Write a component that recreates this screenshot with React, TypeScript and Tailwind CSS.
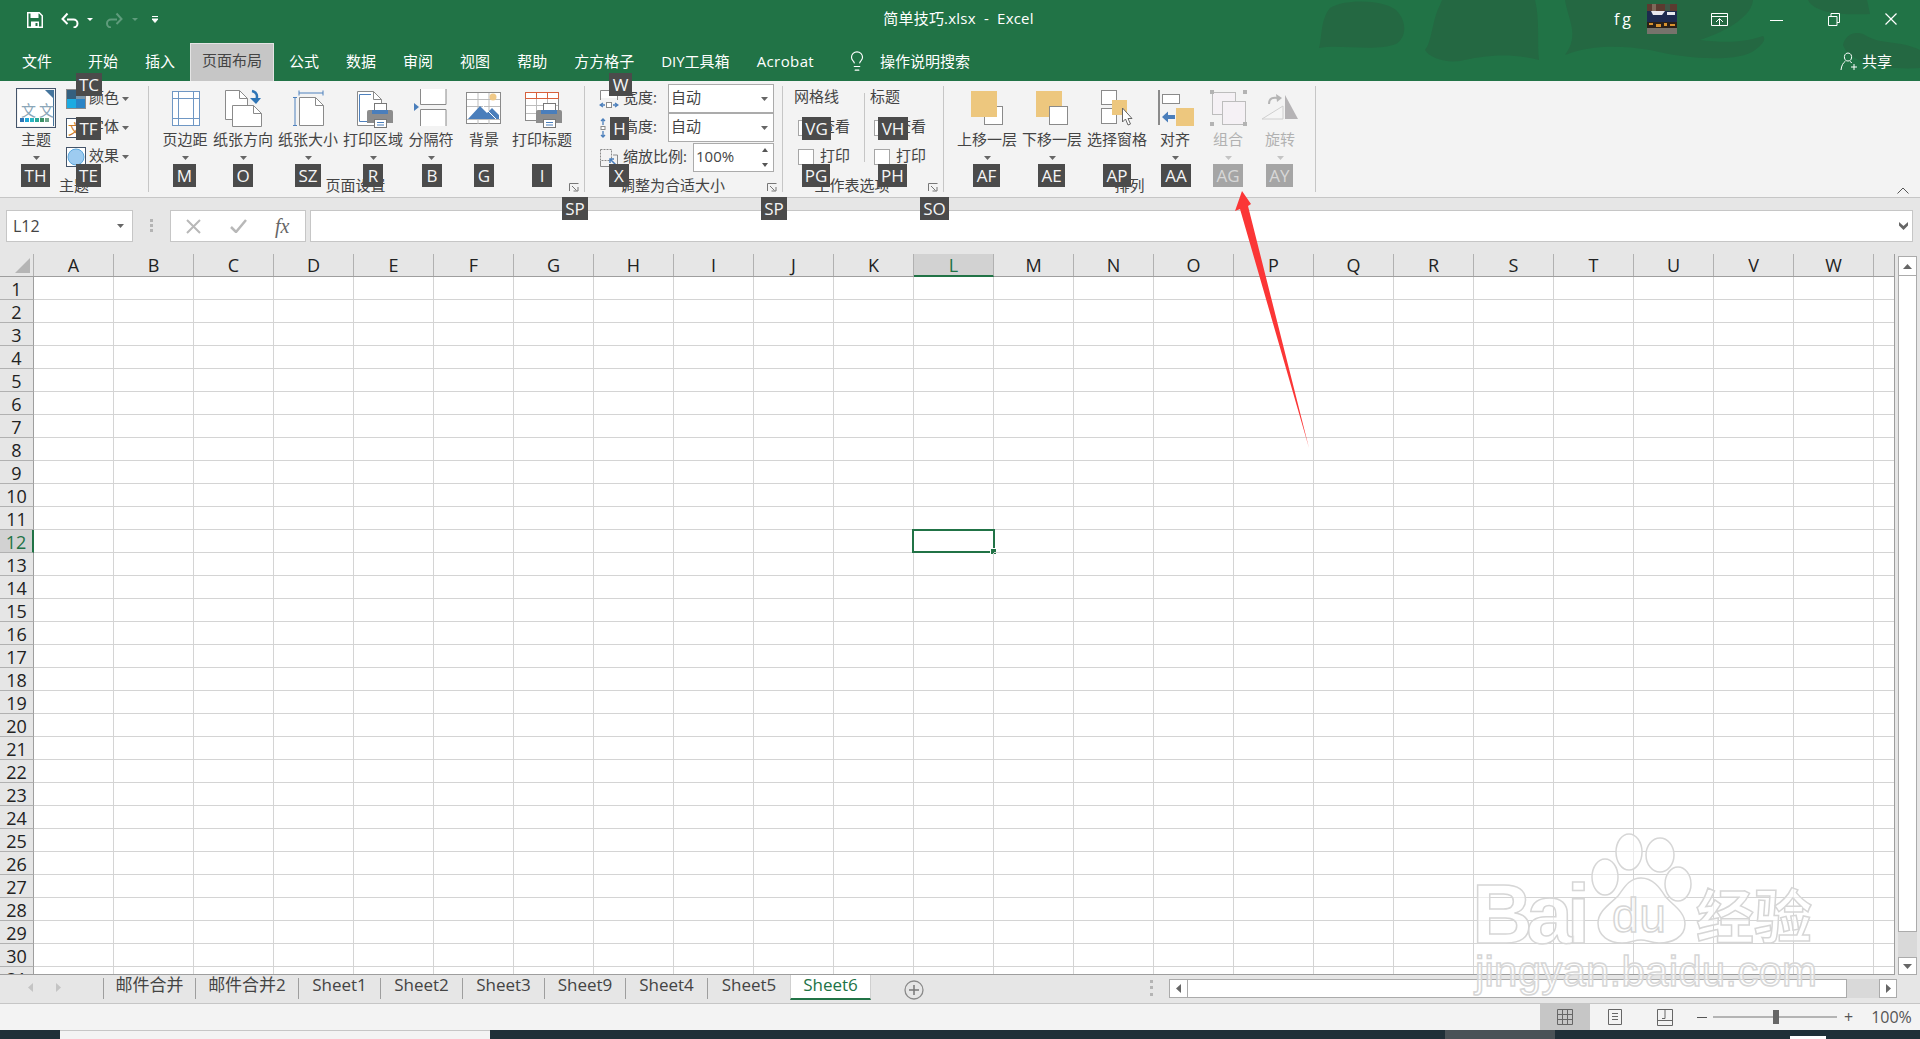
import React from 'react';
import { Lightbulb } from 'lucide-react';

const COLS = 'ABCDEFGHIJKLMNOPQRSTUVW'.split('');
const ROWS = Array.from({ length: 31 }, (_, i) => i + 1);

const KEYTIPS: { x: number; y: number; w: number; t: string; off?: boolean }[] = [
  { x: 76, y: 73, w: 26, t: 'TC' }, { x: 76, y: 117, w: 25, t: 'TF' }, { x: 76, y: 164, w: 25, t: 'TE' },
  { x: 21, y: 164, w: 29, t: 'TH' }, { x: 173, y: 164, w: 23, t: 'M' }, { x: 233, y: 164, w: 20, t: 'O' },
  { x: 295, y: 164, w: 26, t: 'SZ' }, { x: 363, y: 164, w: 20, t: 'R' }, { x: 422, y: 164, w: 20, t: 'B' },
  { x: 474, y: 164, w: 20, t: 'G' }, { x: 532, y: 164, w: 20, t: 'I' }, { x: 562, y: 197, w: 26, t: 'SP' },
  { x: 609, y: 73, w: 23, t: 'W' }, { x: 610, y: 117, w: 19, t: 'H' }, { x: 609, y: 164, w: 20, t: 'X' },
  { x: 761, y: 197, w: 26, t: 'SP' }, { x: 802, y: 117, w: 29, t: 'VG' }, { x: 878, y: 117, w: 30, t: 'VH' },
  { x: 802, y: 164, w: 28, t: 'PG' }, { x: 878, y: 164, w: 29, t: 'PH' }, { x: 920, y: 197, w: 29, t: 'SO' },
  { x: 973, y: 164, w: 27, t: 'AF' }, { x: 1038, y: 164, w: 27, t: 'AE' }, { x: 1103, y: 164, w: 28, t: 'AP' },
  { x: 1161, y: 164, w: 30, t: 'AA' }, { x: 1213, y: 164, w: 30, t: 'AG', off: true }, { x: 1266, y: 164, w: 27, t: 'AY', off: true },
];

const SHEETS = [
  { name: '邮件合并', w: 'w-[92px]' }, { name: '邮件合并2', w: 'w-[103px]' }, { name: 'Sheet1', w: 'w-[82px]' },
  { name: 'Sheet2', w: 'w-[82px]' }, { name: 'Sheet3', w: 'w-[82px]' }, { name: 'Sheet9', w: 'w-[81px]' },
  { name: 'Sheet4', w: 'w-[82px]' }, { name: 'Sheet5', w: 'w-[83px]' },
];

const Caret = ({ off }: { off?: boolean }) => (
  <svg width="7" height="4" viewBox="0 0 7 4" className="shrink-0">
    <path d="M0 0h7L3.5 4z" fill={off ? '#c4c4c4' : '#666'} />
  </svg>
);

// icons are drawn in page coordinates: the viewBox is the window around the button
const Ico = ({ cx, children }: { cx: number; children: React.ReactNode }) => (
  <svg width="70" height="44" viewBox={`${cx - 35} 86 70 44`} className="shrink-0 overflow-visible">
    {children}
  </svg>
);

const Printer = ({ dx = 0 }: { dx?: number }) => (
  <g transform={`translate(${dx} 0)`}>
    <rect x="374.5" y="103.5" width="12" height="9" fill="#fff" stroke="#777" />
    <path d="M369 110h22a2 2 0 0 1 2 2v11h-26v-11a2 2 0 0 1 2-2z" fill="#8c8c8c" />
    <rect x="372" y="110" width="16" height="4" fill="#4a7ebb" />
    <rect x="374.5" y="119.5" width="12" height="8" fill="#fff" stroke="#777" />
    <path d="M377 122.5h7M377 125h7" stroke="#4a7ebb" />
  </g>
);

const Doc = ({ x, y, w, h }: { x: number; y: number; w: number; h: number }) => (
  <g>
    <path d={`M${x + .5} ${y + .5}h${w - 8}l8 8v${h - 8}h-${w}z`} fill="#fff" stroke="#8a8a8a" />
    <path d={`M${x + w - 7.5} ${y + .5}v8h8`} fill="none" stroke="#8a8a8a" />
  </g>
);

const icons: Record<string, React.ReactNode> = {
  margin: (
    <Ico cx={185}>
      <rect x="172.5" y="91.5" width="27" height="34" fill="#fff" stroke="#6f97c4" />
      <path d="M178.5 91v35M193.5 91v35M172 98.5h28M172 118.5h28" stroke="#6f97c4" />
    </Ico>
  ),
  orient: (
    <Ico cx={243}>
      <Doc x={225} y={90} w={22} h={29} />
      <Doc x={232} y={105} w={29} h={21} />
      <path d="M252 91c5 1 6 5 4 10" fill="none" stroke="#2e75b6" strokeWidth="2.5" />
      <path d="M250 98l6 6 5-6z" fill="#2e75b6" />
    </Ico>
  ),
  size: (
    <Ico cx={308}>
      <path d="M299 90.5v5M323 90.5v5M299 93h24M293 97.5h4M293 125.5h4M295 97v29" stroke="#4f81bd" fill="none" />
      <Doc x={299} y={97} w={24} h={28} />
    </Ico>
  ),
  area: (
    <Ico cx={373}>
      <Doc x={357} y={91} w={24} h={34} />
      <path d="M371 94.5h-11.500v27h8" fill="none" stroke="#4f81bd" />
      <Printer />
    </Ico>
  ),
  breaks: (
    <Ico cx={431}>
      <path d="M420.500 89v15.500h25.500V89M420.500 126v-16.500h25.500V126" fill="#fff" stroke="#8a8a8a" />
      <path d="M414 103l5 4-5 4z" fill="#4a7ebb" />
    </Ico>
  ),
  bg: (
    <Ico cx={484}>
      <rect x="466.500" y="92.500" width="34" height="31" fill="#fff" stroke="#8a8a8a" />
      <path d="M467 99.500h33M467 106.500h33M467 119.500h33M478 93v31M489 93v31" stroke="#bdbdbd" />
      <path d="M468 119l12-13 7 7 5-5 7 7v4z" fill="#4a7ebb" />
      <path d="M483 106l13 13" stroke="#fff" />
      <circle cx="493" cy="97" r="3.500" fill="#f0c987" />
    </Ico>
  ),
  titles: (
    <Ico cx={542}>
      <rect x="525.500" y="92.500" width="33" height="28" fill="#fff" stroke="#8a8a8a" />
      <path d="M526 105.500h32M526 113.500h32M536.500 98v23M547.500 98v23" stroke="#bdbdbd" />
      <path d="M525.500 92.500h33v6h-33zM536.500 92v6M547.500 92v6" fill="none" stroke="#d9603b" />
      <Printer dx={169} />
    </Ico>
  ),
  up: (
    <Ico cx={987}>
      <rect x="984.500" y="106.500" width="18" height="18" fill="#fff" stroke="#8a8a8a" />
      <rect x="971" y="91" width="26" height="26" fill="#edc77e" />
    </Ico>
  ),
  down: (
    <Ico cx={1052}>
      <rect x="1036" y="91" width="26" height="26" fill="#edc77e" />
      <rect x="1049.500" y="106.500" width="18" height="18" fill="#fff" stroke="#8a8a8a" />
    </Ico>
  ),
  pane: (
    <Ico cx={1117}>
      <rect x="1101.500" y="90.500" width="15" height="14" fill="#fff" stroke="#8a8a8a" />
      <rect x="1101.500" y="108.500" width="15" height="15" fill="#fff" stroke="#8a8a8a" />
      <path d="M1112 100h15v15h-5v-0h-5v-0h-5z" fill="#edc77e" />
      <path d="M1122.500 108v14l3-3 2.500 6 2.500-1-2.500-5.500h4z" fill="#fff" stroke="#666" />
    </Ico>
  ),
  align: (
    <Ico cx={1175}>
      <rect x="1158" y="90" width="2" height="35" fill="#8a8a8a" />
      <rect x="1162.500" y="94.500" width="17" height="9" fill="#fff" stroke="#8a8a8a" />
      <rect x="1176" y="108" width="18" height="18" fill="#edc77e" />
      <path d="M1162 117l6-5.500v3.500h7v4h-7v3.500z" fill="#4a7ebb" />
    </Ico>
  ),
  group: (
    <Ico cx={1228}>
      <rect x="1212.500" y="92.500" width="23" height="22" fill="#f5f1f5" stroke="#bdbdbd" />
      <rect x="1222.500" y="101.500" width="23" height="23" fill="#f5f1f5" stroke="#bdbdbd" />
      <path d="M1210 90h4v4h-4zM1243 90h4v4h-4zM1210 122h4v4h-4zM1243 122h4v4h-4z" fill="#b3b3b3" />
    </Ico>
  ),
  rotate: (
    <Ico cx={1280}>
      <path d="M1285 95l13 24h-13z" fill="#b5b3b5" />
      <path d="M1283 106v13h-21z" fill="#f5f5f5" stroke="#cfcfcf" />
      <path d="M1269 104c0-6 4-7 9-6" fill="none" stroke="#b5b5b5" strokeWidth="2" />
      <path d="M1276 94l6 4-5 4z" fill="#b5b5b5" />
    </Ico>
  ),
  theme: (
    <Ico cx={36}>
      <rect x="16.500" y="88.500" width="39" height="39" fill="#f3f3f3" stroke="#44546a" />
      <path d="M18 90h27l8 8v28H18z" fill="#fff" />
      <path d="M45 90h9v36h-1V98l-8-8z" fill="#44749c" />
      <text x="21" y="116" fontSize="15" fill="#8aa6b8" fontFamily="Noto Sans CJK SC">文</text>
      <text x="39" y="116" fontSize="15" fill="#8aa6b8" fontFamily="Noto Sans CJK SC" textLength="13">文</text>
      <rect x="20" y="118" width="4" height="4" fill="#2e75b6" />
      <rect x="25" y="118" width="4" height="4" fill="#1fa8d8" />
      <rect x="30" y="118" width="4" height="4" fill="#2bb6c4" />
      <rect x="35" y="118" width="4" height="4" fill="#2aa89a" />
      <rect x="40" y="118" width="4" height="4" fill="#3c9266" />
      <rect x="45" y="118" width="4" height="4" fill="#6fa58c" />
    </Ico>
  ),
};

const BigBtn = ({ w, label, icon, off, noCaret }: { w: string; label: string; icon: React.ReactNode; off?: boolean; noCaret?: boolean }) => (
  <div className={`${w} flex flex-col items-center shrink-0`}>
    {icon}
    <div className={`h-[20px] leading-[18px] text-[15px] whitespace-nowrap ${off ? 'text-[#b1b1b1]' : 'text-[#444]'}`}>{label}</div>
    <div className="h-[10px] flex items-end">{noCaret ? null : <Caret off={off} />}</div>
  </div>
);

const Launcher = () => (
  <div className="w-[22px] flex items-end pl-[7px] shrink-0">
    <svg width="10" height="9" viewBox="0 0 10 9">
      <path d="M.5 8V.5H9.500M3 3l4.500 4.500M4.500 8H9V4" fill="none" stroke="#777" />
    </svg>
  </div>
);

const Group = ({ w, label, launcher, children }: { w: string; label: string; launcher?: boolean; children: React.ReactNode }) => (
  <div className={`${w} shrink-0 h-[106px] mt-[5px] border-r border-[#c6c6c6] flex flex-col`}>
    <div className="h-[91px] flex">{children}</div>
    <div className="h-[15px] flex">
      <div className="flex-1 text-center text-[15px] leading-[16px] text-[#444] whitespace-nowrap">{label}</div>
      {launcher && <Launcher />}
    </div>
  </div>
);

const SmallRow = ({ label, children }: { label: string; children: React.ReactNode }) => (
  <div className="h-[29px] flex items-center text-[15px] text-[#444]">
    {children}
    <span className="ml-[3px] mr-[3px] pb-[2px]">{label}</span>
    <Caret />
  </div>
);

const Combo = ({ w, text, spin }: { w: string; text: string; spin?: boolean }) => (
  <div className={`${w} h-[29px] bg-white border border-[#ababab] flex items-center justify-between pl-[2px] pr-[5px] text-[15px] text-[#444]`}>
    <span className="pb-[2px]">{text}</span>
    {spin ? (
      <div className="flex flex-col gap-[11px]">
        <svg width="6" height="4" viewBox="0 0 6 4"><path d="M0 4h6L3 0z" fill="#555" /></svg>
        <svg width="6" height="4" viewBox="0 0 6 4"><path d="M0 0h6L3 4z" fill="#555" /></svg>
      </div>
    ) : (
      <Caret />
    )}
  </div>
);

const Check = ({ label }: { label: string }) => (
  <div className="h-[29px] flex items-center ml-[4px] text-[15px] text-[#444]">
    <div className="w-[16px] h-[16px] bg-white border border-[#a6a6a6] mr-[6px]" />
    <span className="pb-[2px]">{label}</span>
  </div>
);

function Avatar() {
  return (
    <svg width="30" height="30" viewBox="0 0 30 30" className="ml-[13px] shrink-0">
      <rect width="30" height="30" fill="#4c4a44" />
      <rect width="30" height="7" fill="#5b3b30" />
      <rect x="5" y="0" width="4" height="7" fill="#7f6a5a" />
      <rect x="18" y="0" width="5" height="7" fill="#3f5646" />
      <rect y="7" width="30" height="11" fill="#1d2a4e" />
      <path d="M4 7h14l-3 4H6zM20 8h8v3h-8z" fill="#e8e8ee" />
      <rect y="18" width="30" height="6" fill="#2a2018" />
      <path d="M2 19h4v2H2zM9 20h5v3H9zM17 19h3v3h-3zM23 20h5v2h-5z" fill="#d8922e" />
      <rect y="24" width="30" height="6" fill="#77736c" />
    </svg>
  );
}

export default function App() {
  return (
    <div className="relative w-[1920px] h-[1039px] overflow-hidden flex flex-col bg-[#e6e6e6] font-['Open_Sans','Noto_Sans_CJK_SC',sans-serif]">
      {/* Title bar + tabs */}
      <div className="relative h-[81px] shrink-0 bg-[#217346] text-white">
        <svg width="1920" height="81" viewBox="0 0 1920 81" className="absolute inset-0">
          <g fill="#246842">
            <path d="M1319 48C1322 40 1320 20 1330 8C1345-2 1385 0 1396 10C1408 22 1406 38 1396 44C1375 52 1340 44 1319 48Z" />
            <path d="M1425 50C1432 42 1432 20 1440 5L1442 0H1535C1540 20 1537 45 1539 60C1510 52 1480 56 1460 61C1445 63 1430 58 1425 50Z" />
            <path d="M1565 0C1568 20 1580 35 1565 55C1590 45 1620 45 1650 50C1690 60 1740 62 1755 50C1766 42 1765 38 1763 36C1740 44 1720 42 1700 40C1730 30 1752 15 1753 0Z" />
            <path d="M1808 0C1815 15 1850 15 1870 14L1867 0Z" />
            <path d="M1843 45C1845 35 1855 30 1865 35C1880 45 1900 40 1920 50V68C1890 70 1850 65 1843 45Z" />
          </g>
        </svg>
        <div className="relative h-[43px] pb-[5px] grid grid-cols-[1fr_auto_1fr] items-center">
          <div className="flex items-center pl-[27px] pt-[1px]">
            <svg width="16" height="16" viewBox="0 0 16 16">
              <path d="M.75.75h11.500l3 3v11.500H.75z" fill="none" stroke="#fff" strokeWidth="1.500" />
              <path d="M3.500 1v5h8V1zM4 15v-5.500h8V15" fill="#fff" />
              <rect x="8.500" y="11" width="2" height="3" fill="#217346" />
            </svg>
            <svg width="19" height="16" viewBox="0 0 19 16" className="ml-[18px]">
              <path d="M6 7.500h6.500a4 4 0 0 1 0 8" fill="none" stroke="#fff" strokeWidth="2" />
              <path d="M6.500 1.500L1.500 7l5 5" fill="none" stroke="#fff" strokeWidth="2" />
            </svg>
            <span className="ml-[7px]"><svg width="6" height="3" viewBox="0 0 6 3" className="block"><path d="M0 0h6L3 3z" fill="#fff" /></svg></span>
            <svg width="18" height="16" viewBox="0 0 18 16" className="ml-[12px]">
              <path d="M12 7.500H6a4 4 0 0 0 0 8" fill="none" stroke="#5f9c7c" strokeWidth="2" />
              <path d="M11.500 1.500l5 5.500-5 5" fill="none" stroke="#5f9c7c" strokeWidth="2" />
            </svg>
            <span className="ml-[9px]"><svg width="6" height="3" viewBox="0 0 6 3" className="block"><path d="M0 0h6L3 3z" fill="#5f9c7c" /></svg></span>
            <svg width="6" height="7" viewBox="0 0 6 7" className="ml-[14px]"><path d="M0 .5h6M0 3h6L3 6.500z" stroke="#fff" fill="#fff" /></svg>
          </div>
          <div className="text-[15px] whitespace-pre mr-[3px] mb-[2px] tracking-[0.2px]">简单技巧.xlsx  -  Excel</div>
          <div className="flex items-center justify-end pr-[23px]">
            <span className="text-[16px] tracking-[3px]">fg</span>
            <Avatar />
            <svg width="17" height="13" viewBox="0 0 17 13" className="ml-[34px]">
              <path d="M.5.500h16v12H.5zM1 3.500h15M5 9l3.500-3.500L12 9M8.500 6v6.500" fill="none" stroke="#fff" />
            </svg>
            <svg width="13" height="13" viewBox="0 0 13 13" className="ml-[42px]"><path d="M0 7.500h13" stroke="#fff" /></svg>
            <svg width="12" height="13" viewBox="0 0 12 13" className="ml-[45px]">
              <path d="M3 3V.5h8.500v9H9M.5 3.500h8.500v9H.5z" fill="none" stroke="#fff" />
            </svg>
            <svg width="12" height="12" viewBox="0 0 12 12" className="ml-[45px]"><path d="M.5.500l11 11M11.500.500l-11 11" stroke="#fff" strokeWidth="1.200" /></svg>
          </div>
        </div>
        <div className="relative h-[38px] flex items-center pl-[22px] pb-[2px] gap-[27px] text-[15px] whitespace-nowrap">
          <span className="mr-[9px]">文件</span>
          <span>开始</span>
          <span>插入</span>
          <span className="h-[38px] -mx-[12px] px-[11px] mt-[2px] flex items-center pb-[4px] bg-[#c6c6c6] text-[#444] border-x border-t border-[#e4e4e4]">页面布局</span>
          <span>公式</span>
          <span>数据</span>
          <span>审阅</span>
          <span>视图</span>
          <span>帮助</span>
          <span>方方格子</span>
          <span>DIY工具箱</span>
          <span className="tracking-[0.4px]">Acrobat</span>
          <span className="flex items-center ml-[5px]">
            <Lightbulb size={22} strokeWidth={1.25} />
            <span className="ml-[12px]">操作说明搜索</span>
          </span>
          <span className="ml-auto mr-[28px] flex items-center">
            <svg width="17" height="18" viewBox="0 0 17 18" className="mr-[5px]">
              <path d="M8 1c-3 0-4 3-3.500 5 .5 2 1.500 3 3.500 3s3-1 3.500-3C12 4 11 1 8 1zM1 18c.5-4.500 2-7 4.500-9M10 9.500c1 .5 1.500 1 2 1.500M11 15h6M14 12v6" fill="none" stroke="#fff" />
            </svg>
            共享
          </span>
        </div>
      </div>

      {/* Ribbon */}
      <div className="h-[117px] shrink-0 bg-[#f3f3f3] border-b border-[#c6c6c6] flex">
        <Group w="w-[149px]" label="主题">
          <div className="ml-[-1px] w-[67px]">
            <div className="flex flex-col items-center w-[74px]">
              {icons.theme}
              <div className="h-[20px] leading-[18px] text-[15px] text-[#444]">主题</div>
              <div className="h-[10px] flex items-end"><Caret /></div>
            </div>
          </div>
          <div className="flex flex-col -mt-[2px]">
            <SmallRow label="颜色">
              <svg width="20" height="20" viewBox="0 0 20 20">
                <rect width="20" height="20" fill="#8a8a8a" />
                <rect x="1" y="1" width="9" height="9" fill="#35607f" />
                <rect x="10" y="1" width="9" height="9" fill="#7a98ae" />
                <rect x="1" y="10" width="9" height="9" fill="#1cabe2" />
                <rect x="10" y="10" width="9" height="9" fill="#2b84c6" />
              </svg>
            </SmallRow>
            <SmallRow label="字体">
              <svg width="20" height="20" viewBox="0 0 20 20">
                <rect x=".5" y=".5" width="19" height="19" fill="#fff" stroke="#44546a" />
                <text x="2" y="16" fontSize="14" fill="#c97a2b" fontFamily="Noto Sans CJK SC">文</text>
              </svg>
            </SmallRow>
            <SmallRow label="效果">
              <svg width="20" height="20" viewBox="0 0 20 20">
                <rect x=".5" y=".5" width="19" height="19" fill="#fff" stroke="#44546a" />
                <circle cx="10" cy="10" r="8" fill="#9dcbf0" stroke="#5ba7dc" />
              </svg>
            </SmallRow>
          </div>
        </Group>

        <Group w="w-[436px]" label="页面设置" launcher>
          <div className="w-[9px] shrink-0" />
          <BigBtn w="w-[54px]" label="页边距" icon={icons.margin} />
          <BigBtn w="w-[62px]" label="纸张方向" icon={icons.orient} />
          <BigBtn w="w-[68px]" label="纸张大小" icon={icons.size} />
          <BigBtn w="w-[62px]" label="打印区域" icon={icons.area} />
          <BigBtn w="w-[54px]" label="分隔符" icon={icons.breaks} />
          <BigBtn w="w-[52px]" label="背景" icon={icons.bg} noCaret />
          <BigBtn w="w-[64px]" label="打印标题" icon={icons.titles} noCaret />
        </Group>

        <Group w="w-[198px]" label="调整为合适大小" launcher>
          <div className="-mt-[2px] pl-[14px]">
            <div className="h-[29px] flex items-center text-[15px] text-[#444]">
              <svg width="20" height="20" viewBox="0 0 20 20" className="shrink-0 mr-[4px]">
                <path d="M1.500 9V1.500h17V9" fill="#fff" stroke="#8a8a8a" />
                <path d="M1.500 9v3M18.500 9v3" stroke="#8a8a8a" strokeDasharray="2 1" />
                <rect x="7.500" y="13.500" width="5" height="5" fill="#fff" stroke="#8a8a8a" />
                <path d="M6 16H1M4 14l-3 2 3 2M14 16h5M16 14l3 2-3 2" fill="none" stroke="#4a7ebb" strokeWidth="1.300" />
              </svg>
              <span className="w-[45px] pb-[2px] whitespace-nowrap">宽度:</span>
              <Combo w="w-[106px]" text="自动" />
            </div>
            <div className="h-[29px] flex items-center text-[15px] text-[#444]">
              <svg width="20" height="20" viewBox="0 0 20 20" className="shrink-0 mr-[4px]">
                <path d="M4 1v6M2 3l2-2 2 2M4 19v-6M2 17l2 2 2-2" fill="none" stroke="#4a7ebb" strokeWidth="1.300" />
                <rect x="2" y="8.500" width="4" height="3" fill="#fff" stroke="#8a8a8a" />
              </svg>
              <span className="w-[45px] pb-[2px] whitespace-nowrap">高度:</span>
              <Combo w="w-[106px]" text="自动" />
            </div>
            <div className="h-[29px] mt-[1px] flex items-center text-[15px] text-[#444]">
              <svg width="20" height="20" viewBox="0 0 20 20" className="shrink-0 mr-[4px]">
                <rect x="1.500" y="1.500" width="11" height="11" fill="none" stroke="#8a8a8a" strokeDasharray="2 1" />
                <path d="M1.500 13v5.500h17V7H14" fill="none" stroke="#8a8a8a" />
                <path d="M17 17l-6-6M11 15v-4h4" fill="none" stroke="#4a7ebb" strokeWidth="1.500" />
              </svg>
              <span className="w-[70px] pb-[2px] whitespace-nowrap">缩放比例:</span>
              <Combo w="w-[81px]" text="100%" spin />
            </div>
          </div>
        </Group>

        <Group w="w-[161px]" label="工作表选项" launcher>
          <div className="w-[81px] h-[78px] -mt-[2px] pl-[11px]">
            <div className="h-[29px] leading-[25px] text-[15px] text-[#444]">网格线</div>
            <Check label="查看" />
            <Check label="打印" />
          </div>
          <div className="w-[1px] h-[69px] mt-[7px] bg-[#c6c6c6]" />
          <div className="-mt-[2px] pl-[5px]">
            <div className="h-[29px] leading-[25px] text-[15px] text-[#444]">标题</div>
            <Check label="查看" />
            <Check label="打印" />
          </div>
        </Group>

        <Group w="w-[372px]" label="排列">
          <div className="w-[8px] shrink-0" />
          <BigBtn w="w-[70px]" label="上移一层" icon={icons.up} />
          <BigBtn w="w-[60px]" label="下移一层" icon={icons.down} />
          <BigBtn w="w-[70px]" label="选择窗格" icon={icons.pane} noCaret />
          <BigBtn w="w-[46px]" label="对齐" icon={icons.align} />
          <BigBtn w="w-[60px]" label="组合" icon={icons.group} off />
          <BigBtn w="w-[44px]" label="旋转" icon={icons.rotate} off />
        </Group>

        <div className="ml-auto flex items-end pb-[3px] pr-[11px]">
          <svg width="12" height="7" viewBox="0 0 12 7"><path d="M.5 6.500L6 1l5.500 5.500" fill="none" stroke="#555" /></svg>
        </div>
      </div>

      {/* Formula bar */}
      <div className="h-[56px] shrink-0 pt-[12px] flex items-start bg-[#e6e6e6]">
        <div className="ml-[6px] w-[127px] h-[32px] bg-white border border-[#c6c6c6] flex items-center justify-between pl-[6px] pr-[8px] text-[16px] text-[#444]">
          L12
          <Caret />
        </div>
        <div className="ml-[17px] w-[3px] h-[13px] mt-[9px] border-y-[3px] border-[#b4b4b4] relative">
          <div className="h-[3px] mt-[2px] bg-[#b4b4b4]" />
        </div>
        <div className="ml-[17px] w-[136px] h-[32px] bg-white border border-[#c6c6c6] flex items-center pl-[15px]">
          <svg width="15" height="15" viewBox="0 0 15 15"><path d="M1 1l13 13M14 1L1 14" stroke="#b8b8b8" strokeWidth="2" /></svg>
          <svg width="17" height="14" viewBox="0 0 17 14" className="ml-[29px]"><path d="M1 8l5 5L16 1" fill="none" stroke="#b8b8b8" strokeWidth="2.500" /></svg>
          <span className="ml-[28px] text-[20px] italic font-['Liberation_Serif',serif] text-[#666]">fx</span>
        </div>
        <div className="ml-[4px] w-[1603px] h-[32px] bg-white border border-[#c6c6c6] flex items-center justify-end pr-[4px]">
          <svg width="9" height="8" viewBox="0 0 9 8"><path d="M0 0l4.500 4L9 0v3.500L4.500 8 0 3.500z" fill="#666" /></svg>
        </div>
      </div>

      {/* Sheet */}
      <div className="h-[721px] shrink-0 flex overflow-hidden">
        <div className="w-[1895px] shrink-0 h-full overflow-hidden border-r border-b border-[#9e9e9e] bg-white">
          <div className="flex h-[23px] bg-[#e6e6e6] border-b border-[#9e9e9e] text-[18px] leading-[23px] text-[#222]">
            <div className="w-[34px] shrink-0 border-r border-[#b1b1b1] pt-[4px] pl-[15px]">
              <svg width="15" height="15" viewBox="0 0 15 15" className="block"><path d="M15 0v15H0z" fill="#b5b5b5" /></svg>
            </div>
            {COLS.map((c) => (
              <div
                key={c}
                className={
                  c === 'L'
                    ? 'w-[80px] shrink-0 text-center bg-[#d2d2d2] border-r border-[#b1b1b1] border-b-2 border-b-[#217346] h-[23px] text-[#217346]'
                    : 'w-[80px] shrink-0 text-center border-r border-[#b1b1b1]'
                }
              >
                {c}
              </div>
            ))}
          </div>
          {ROWS.map((r) => (
            <div key={r} className="flex h-[23px]">
              <div
                className={
                  r === 12
                    ? 'w-[34px] shrink-0 h-[23px] bg-[#d2d2d2] border-r-2 border-[#217346] border-b border-b-[#b1b1b1] text-[18px] leading-[25px] text-center text-[#217346]'
                    : 'w-[34px] shrink-0 h-[23px] bg-[#e6e6e6] border-r border-[#9e9e9e] border-b border-b-[#b1b1b1] text-[18px] leading-[25px] text-center text-[#222]'
                }
              >
                {r}
              </div>
              {COLS.map((c) => (
                <div key={c} className="relative w-[80px] shrink-0 h-[23px] border-r border-b border-[#d4d4d4]">
                  {r === 12 && c === 'L' && (
                    <div className="absolute -left-[2px] -top-[1px] w-[83px] h-[24px] border-2 border-[#217346]">
                      <div className="absolute -right-[3px] -bottom-[3px] w-[5px] h-[5px] bg-[#217346] outline outline-1 outline-white" />
                    </div>
                  )}
                </div>
              ))}
              <div className="flex-1 h-[23px] border-b border-[#d4d4d4]" />
            </div>
          ))}
        </div>
        <div className="flex-1 pl-[3px] flex flex-col">
          <div className="w-[19px] h-[20px] mt-[2px] bg-white border border-[#ababab] flex items-center justify-center">
            <svg width="9" height="5" viewBox="0 0 9 5"><path d="M0 5h9L4.500 0z" fill="#666" /></svg>
          </div>
          <div className="w-[19px] h-[656px] bg-white border-x border-b border-[#ababab]" />
          <div className="w-[19px] h-[25px] bg-[#d9d9d9]" />
          <div className="w-[19px] h-[18px] bg-white border border-[#ababab] flex items-center justify-center">
            <svg width="9" height="5" viewBox="0 0 9 5"><path d="M0 0h9L4.500 5z" fill="#666" /></svg>
          </div>
        </div>
      </div>

      {/* Sheet tabs + horizontal scroll */}
      <div className="h-[29px] shrink-0 bg-[#e6e6e6] border-b border-[#c6c6c6] flex items-start text-[17px] text-[#444]">
        <div className="w-[103px] shrink-0 h-[24px] flex items-center pl-[28px]">
          <svg width="5" height="9" viewBox="0 0 5 9"><path d="M5 0v9L0 4.500z" fill="#c4c4c4" /></svg>
          <svg width="5" height="9" viewBox="0 0 5 9" className="ml-[23px]"><path d="M0 0v9l5-4.500z" fill="#c4c4c4" /></svg>
        </div>
        {SHEETS.map((s) => (
          <div key={s.name} className={`${s.w} shrink-0 h-[21px] mt-[3px] leading-[14px] text-center border-l border-[#9e9e9e] whitespace-nowrap`}>
            {s.name}
          </div>
        ))}
        <div className="w-[81px] shrink-0 h-[25px] bg-white border-b-2 border-[#217346] border-x border-x-[#d0d0d0] text-center leading-[19px] text-[#217346]">
          Sheet6
        </div>
        <svg width="20" height="20" viewBox="0 0 20 20" className="ml-[33px] mt-[5px]">
          <circle cx="10" cy="10" r="9" fill="none" stroke="#8a8a8a" strokeWidth="1.300" />
          <path d="M10 5v10M5 10h10" stroke="#777" strokeWidth="1.500" />
        </svg>
        <div className="w-[3px] h-[16px] ml-[226px] mt-[5px] border-y-[3px] border-[#b4b4b4]">
          <div className="h-[3px] mt-[3px] bg-[#b4b4b4]" />
        </div>
        <div className="ml-[16px] mt-[4px] h-[19px] flex">
          <div className="w-[19px] bg-white border border-[#ababab] flex items-center justify-center">
            <svg width="5" height="9" viewBox="0 0 5 9"><path d="M5 0v9L0 4.500z" fill="#666" /></svg>
          </div>
          <div className="w-[659px] bg-white border-y border-r border-[#ababab]" />
          <div className="w-[32px] bg-[#d9d9d9]" />
          <div className="w-[18px] bg-white border border-[#ababab] flex items-center justify-center">
            <svg width="5" height="9" viewBox="0 0 5 9"><path d="M0 0v9l5-4.500z" fill="#666" /></svg>
          </div>
        </div>
      </div>

      {/* Status bar */}
      <div className="h-[26px] shrink-0 bg-[#f3f3f3] flex items-center pl-[1540px] text-[#555]">
        <div className="w-[50px] h-[26px] shrink-0 bg-[#c6c6c6] flex items-center justify-center">
          <svg width="16" height="16" viewBox="0 0 16 16"><path d="M.5.500h15v15H.5zM.5 5.500h15M.5 10.500h15M5.500.500v15M10.500.500v15" fill="none" stroke="#666" /></svg>
        </div>
        <div className="w-[50px] shrink-0 flex justify-center">
          <svg width="16" height="16" viewBox="0 0 16 16"><path d="M1.500.500h13v15h-13zM5 4.500h6M5 7.500h6M5 10.500h6" fill="none" stroke="#666" /></svg>
        </div>
        <div className="w-[50px] shrink-0 flex justify-center">
          <svg width="16" height="17" viewBox="0 0 16 17"><path d="M.5.500h15v16H.5zM.5 11.500h15M8 .500v9h-3" fill="none" stroke="#666" /></svg>
        </div>
        <span className="ml-[7px] w-[10px] h-[1px] bg-[#555] shrink-0" />
        <div className="ml-[6px] w-[124px] h-[2px] bg-[#b4b4b4] relative shrink-0">
          <div className="absolute left-[60px] -top-[6px] w-[6px] h-[14px] bg-[#666]" />
        </div>
        <span className="ml-[7px] text-[16px] leading-none shrink-0">+</span>
        <span className="ml-[18px] text-[16px] shrink-0">100%</span>
      </div>

      {/* Task bar remains at the bottom of the capture */}
      <div className="h-[9px] shrink-0 bg-[#1f2f38] flex">
        <div className="ml-[60px] w-[430px] bg-[#f3f3f3] border-t border-[#c6c6c6]" />
        <div className="ml-[955px] w-[110px] bg-[#4a5257]" />
        <div className="ml-[235px] w-[36px] h-[3px] mt-[6px] bg-white" />
      </div>

      {/* KeyTips */}
      {KEYTIPS.map((k, i) => (
        <div
          key={i}
          style={{ left: k.x, top: k.y, width: k.w }}
          className={`absolute h-[23px] flex items-center justify-center text-[17px] leading-none ${k.off ? 'bg-[#a5a5a5] text-[#d8d8d8]' : 'bg-[#4b4b4b] text-[#f5f5f5]'}`}
        >
          {k.t}
        </div>
      ))}

      {/* Red arrow annotation */}
      <svg width="1920" height="1039" viewBox="0 0 1920 1039" className="absolute inset-0 pointer-events-none">
        <path d="M1242 191L1251 204L1248 206L1309 448L1240 209L1235 211Z" fill="#fb3636" />
      </svg>

      {/* Baidu watermark */}
      <svg width="1920" height="1039" viewBox="0 0 1920 1039" className="absolute inset-0 pointer-events-none">
        <g fill="#ffffff" fillOpacity="0.55" stroke="#d6d6d6" strokeWidth="1.500">
          <ellipse cx="1605" cy="877" rx="13" ry="18" />
          <ellipse cx="1629" cy="852" rx="13" ry="18" />
          <ellipse cx="1660" cy="855" rx="14" ry="17" />
          <ellipse cx="1678" cy="884" rx="13" ry="17" />
          <path d="M1641 878c12 0 19 10 24 18 6 8 20 15 20 28 0 14-14 19-26 19-8 0-12-3-18-3-7 0-11 3-19 3-13 0-24-7-24-20 0-12 12-19 20-27 6-8 11-18 23-18z" />
          <text x="1472" y="943" fontSize="84" fontWeight="700" fontFamily="Liberation Sans" textLength="118">Bai</text>
          <text x="1612" y="932" fontSize="48" fontFamily="Liberation Sans" textLength="54">du</text>
          <text x="1696" y="938" fontSize="58" fontWeight="700" fontFamily="Noto Sans CJK SC">经验</text>
          <text x="1475" y="986" fontSize="42" fontFamily="Liberation Sans" textLength="342">jingyan.baidu.com</text>
        </g>
      </svg>
    </div>
  );
}
